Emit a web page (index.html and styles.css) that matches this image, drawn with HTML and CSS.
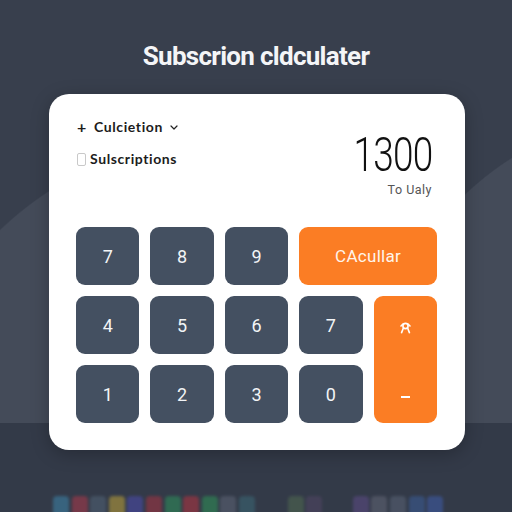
FILE: index.html
```html
<!doctype html>
<html lang="en">
<head>
    <meta charset="UTF-8">
    <title>Subscrion cldculater</title>
    <link rel="stylesheet" href="styles.css">
</head>
<body>

    <div class='screen'>

        <h1 class='title'>Subscrion cldculater</h1>

        <div class='card'>

            <div class='header'>
                <div class='options'>
                    <div class='option'>
                        <span class='plus'>+</span>
                        <span>Culcietion</span>
                        <svg class='chevron' width='8' height='5' viewBox='0 0 8 5'>
                            <path d='M1 1 L4 4 L7 1' fill='none' stroke='#222' stroke-width='1.2' stroke-linecap='round' stroke-linejoin='round'/>
                        </svg>
                    </div>
                    <div class='option option-check'>
                        <span class='checkbox'></span>
                        <span>Sulscriptions</span>
                    </div>
                </div>

                <div class='readout'>
                    <div class='total'>1300</div>
                    <div class='period'>To Ualy</div>
                </div>
            </div>

            <div class='keypad'>
                <div class='key'>7</div>
                <div class='key'>8</div>
                <div class='key'>9</div>
                <div class='key key-accent key-wide'>CAcullar</div>

                <div class='key'>4</div>
                <div class='key'>5</div>
                <div class='key'>6</div>
                <div class='key'>7</div>
                <div class='key key-accent key-tall'>
                    <svg width='11' height='12' viewBox='0 0 11 12'>
                        <circle cx='5.5' cy='4' r='2.6' fill='none' stroke='#fff' stroke-width='1.6'/>
                        <path d='M3.4 6 L1.6 10.6 M7.6 6 L9.4 10.6 M1 4 L3 2 M10 4 L8 2' fill='none' stroke='#fff' stroke-width='1.6' stroke-linecap='round'/>
                    </svg>
                    <span class='minus'></span>
                </div>

                <div class='key'>1</div>
                <div class='key'>2</div>
                <div class='key'>3</div>
                <div class='key'>0</div>
            </div>

        </div>

        <div class='dock'>
            <span class='app' style='background:#3c7fa3'></span>
            <span class='app' style='background:#a3394a'></span>
            <span class='app' style='background:#4f6072'></span>
            <span class='app' style='background:#b39a3a'></span>
            <span class='app' style='background:#4a4aa6'></span>
            <span class='app' style='background:#9c3442'></span>
            <span class='app' style='background:#2f8a5a'></span>
            <span class='app' style='background:#aa3440'></span>
            <span class='app' style='background:#2f8c56'></span>
            <span class='app' style='background:#5a6172'></span>
            <span class='app' style='background:#3b6472'></span>
            <span class='app app-gap' style='background:#4e6650'></span>
            <span class='app' style='background:#4f4562'></span>
            <span class='app app-gap-small' style='background:#5a4a82'></span>
            <span class='app' style='background:#5e6272'></span>
            <span class='app' style='background:#566072'></span>
            <span class='app' style='background:#3a5a92'></span>
            <span class='app' style='background:#3e5aa3'></span>
        </div>

    </div>

</body>
</html>
```

FILE: styles.css
```css
body
{
    margin:           0;
    font-family:      Roboto, "Open Sans", sans-serif;
}

.screen
{
    width:            512px;
    height:           512px;
    overflow:         hidden;
    display:          flex;
    flex-direction:   column;
    background:
        linear-gradient(to bottom, transparent 423px, #333a48 423px),
        radial-gradient(circle 333px at 230px 470px, #444b59 99.6%, transparent 100%),
        radial-gradient(circle 300px at 672px 411px, #444b59 99.6%, transparent 100%),
        #383f4d;
}

.title
{
    margin:           41px 0 0 0;
    height:           30px;
    line-height:      30px;
    text-align:       center;
    font-size:        26px;
    font-weight:      700;
    letter-spacing:   -0.7px;
    color:            #f4f5f7;
}

.card
{
    box-sizing:       border-box;
    width:            416px;
    height:           356px;
    margin:           23px 0 0 49px;
    padding:          24px 28px 27px 27px;
    background-color: #fff;
    border-radius:    20px;
    box-shadow:       0 4px 18px rgba(0, 0, 0, 0.25);
}

.header
{
    height:           109px;
    display:          flex;
    justify-content:  space-between;
}

.options
{
    font-family:      Lato, sans-serif;
    font-size:        14px;
    font-weight:      700;
    letter-spacing:   0.6px;
    color:            #1c1c1c;
}

.option
{
    height:           18px;
    line-height:      18px;
    display:          flex;
    align-items:      center;
    gap:              6px;
}

.option-check
{
    margin-top:       14px;
    gap:              4px;
}

.plus
{
    width:            11px;
    margin-left:      1px;
    font-size:        16px;
}

.chevron
{
    margin-left:      1px;
}

.checkbox
{
    width:            7px;
    height:           11px;
    margin-left:      1px;
    border:           1px solid #c9c9c9;
    border-radius:    2px;
}

.readout
{
    padding-right:    5px;
    text-align:       right;
}

/* the big figure is narrowed so it sits like a condensed face */
.total
{
    margin-top:       15px;
    height:           44px;
    line-height:      44px;
    font-size:        48px;
    font-weight:      300;
    color:            #111;
    transform:        scaleX(0.77);
    transform-origin: right center;
    letter-spacing:   -1px;
}

.period
{
    margin-top:       6px;
    line-height:      14px;
    font-size:        12.5px;
    letter-spacing:   0.5px;
    color:            #555;
}

.keypad
{
    display:          grid;
    grid-template-columns: repeat(5, 1fr);
    grid-auto-rows:   58px;
    gap:              11px;
}

.key
{
    display:          flex;
    align-items:      center;
    justify-content:  center;
    border-radius:    9px;
    background-color: #445061;
    color:            #f2f4f6;
    font-size:        18px;
}

.key-accent
{
    background-color: #fb7d24;
    color:            #fff4ea;
}

.key-wide
{
    grid-column:      span 2;
    font-size:        17px;
    letter-spacing:   0.3px;
}

.key-tall
{
    grid-column:      5;
    grid-row:         span 2;
    flex-direction:   column;
    justify-content:  space-between;
    padding:          26px 0 25px;
}

.minus
{
    width:            9px;
    height:           2px;
    background-color: #fff;
}

.dock
{
    display:          flex;
    gap:              2.6px;
    margin:           46px 0 0 53px;
    filter:           blur(1.6px);
    opacity:          0.6;
}

.app
{
    width:            16px;
    height:           22px;
    border-radius:    4px;
}

.app-gap
{
    margin-left:      30px;
}

.app-gap-small
{
    margin-left:      28px;
}
```
